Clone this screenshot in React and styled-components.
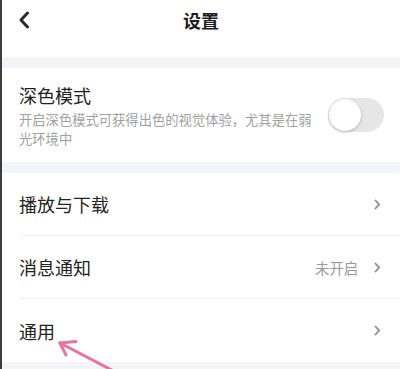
import React from "react";
import styled, { createGlobalStyle } from "styled-components";

const Global = createGlobalStyle`
  html, body {
    margin: 0;
    padding: 0;
    background: #ffffff;
  }
  body {
    font-family: "Noto Sans CJK SC", "Noto Sans", sans-serif;
  }
`;

const Screen = styled.div`
  position: relative;
  width: 398px;
  height: 369px;
  border-left: 2px solid #3d3d3d;
  background: #ffffff;
  overflow: hidden;
  display: flex;
  flex-direction: column;
`;

const Header = styled.div`
  height: 57px;
  flex-shrink: 0;
  position: relative;
  display: flex;
  align-items: flex-start;
  justify-content: center;
  padding-top: 11px;
  box-sizing: border-box;
`;

const Back = styled.svg`
  position: absolute;
  left: 16px;
  top: 11px;
`;

const Title = styled.h1`
  margin: 0;
  font-size: 18px;
  font-weight: 700;
  color: #1c1c1c;
  line-height: 18px;
`;

const Gap = styled.div`
  height: ${(p) => p.h}px;
  flex-shrink: 0;
  background: #f2f4f8;
`;

const DarkRow = styled.div`
  height: 94px;
  flex-shrink: 0;
  display: flex;
  align-items: center;
  justify-content: space-between;
  padding: 0 16px 0 17px;
`;

const TextBlock = styled.div`
  display: flex;
  flex-direction: column;
  padding-top: 2px;
`;

const RowTitle = styled.div`
  font-size: 18px;
  color: #222222;
  line-height: 22px;
`;

const Desc = styled.div`
  width: 298px;
  margin-top: 4px;
  font-size: 13.3px;
  color: #a0a0a0;
  line-height: 19px;
`;

const Toggle = styled.div`
  width: 56px;
  height: 34px;
  border-radius: 17px;
  background: #e6e6e6;
  padding: 1px;
  box-sizing: border-box;
  display: flex;
  align-items: center;
`;

const Knob = styled.div`
  width: 32px;
  height: 32px;
  border-radius: 50%;
  background: #ffffff;
  box-shadow: 0 1px 3px rgba(0, 0, 0, 0.25);
`;

const List = styled.div`
  display: flex;
  flex-direction: column;
  padding-left: 18px;
  flex-shrink: 0;
`;

const Row = styled.div`
  height: 63px;
  display: flex;
  align-items: center;
  justify-content: space-between;
  padding-right: 19px;
  box-sizing: border-box;
  border-bottom: ${(p) => (p.last ? "none" : "1px solid #f1f2f4")};
`;

const Label = styled.span`
  font-size: 18px;
  color: #222222;
  margin-left: -1px;
`;

const Right = styled.div`
  display: flex;
  align-items: center;
  gap: 16px;
`;

const Value = styled.span`
  font-size: 14.3px;
  color: #999999;
`;

const Pointer = styled.svg`
  position: absolute;
  left: 0;
  top: 0;
  pointer-events: none;
`;

const Chevron = () => (
  <svg width="7" height="11" viewBox="0 0 7 11">
    <path
      d="M1.5 1.5 L5.2 5.5 L1.5 9.5"
      fill="none"
      stroke="#8a8a8a"
      strokeWidth="1.8"
      strokeLinecap="round"
      strokeLinejoin="round"
    />
  </svg>
);

const rows = [
  { label: "播放与下载" },
  { label: "消息通知", value: "未开启" },
  { label: "通用" },
];

export default function App() {
  return (
    <>
      <Global />
      <Screen>
        <Header>
          <Back width="12" height="18" viewBox="0 0 12 18">
            <path
              d="M9.5 2 L3 9 L9.5 16"
              fill="none"
              stroke="#2a2a2a"
              strokeWidth="3"
              strokeLinecap="round"
              strokeLinejoin="round"
            />
          </Back>
          <Title>设置</Title>
        </Header>
        <Gap h={11} />
        <DarkRow>
          <TextBlock>
            <RowTitle>深色模式</RowTitle>
            <Desc>开启深色模式可获得出色的视觉体验，尤其是在弱光环境中</Desc>
          </TextBlock>
          <Toggle>
            <Knob />
          </Toggle>
        </DarkRow>
        <Gap h={11} />
        <List>
          {rows.map((r, i) => (
            <Row key={r.label} last={i === rows.length - 1}>
              <Label>{r.label}</Label>
              <Right>
                {r.value && <Value>{r.value}</Value>}
                <Chevron />
              </Right>
            </Row>
          ))}
        </List>
        <Gap h={10} />
        <Pointer width="398" height="369" viewBox="0 0 398 369">
          <g
            fill="none"
            stroke="#e8739c"
            strokeWidth="3"
            strokeLinecap="round"
            strokeLinejoin="round"
          >
            <path d="M58 343 L125 378" />
            <path d="M58 343 L74 341.5" />
            <path d="M58 343 L64 355" />
          </g>
        </Pointer>
      </Screen>
    </>
  );
}
